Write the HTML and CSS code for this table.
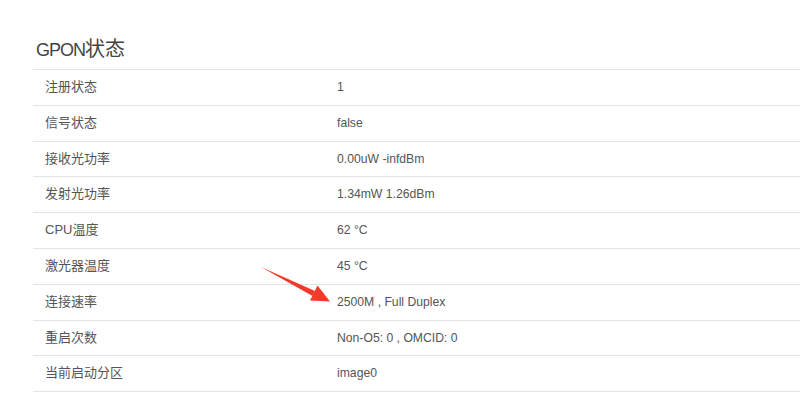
FILE: index.html
```html
<!DOCTYPE html>
<html lang="zh-CN">

<head>
    <meta charset="UTF-8">
    <meta name="viewport" content="width=device-width, initial-scale=1.0">
    <title>GPON状态</title>
    <link rel="stylesheet" href="styles.css">
</head>

<body>
    <div class="content">
        <h2><span class="latin">GPON</span>状态</h2>
        <table class="status-table">
            <tbody>
                <tr><td>注册状态</td><td>1</td></tr>
                <tr><td>信号状态</td><td>false</td></tr>
                <tr><td>接收光功率</td><td>0.00uW -infdBm</td></tr>
                <tr><td>发射光功率</td><td>1.34mW 1.26dBm</td></tr>
                <tr><td>CPU温度</td><td>62 °C</td></tr>
                <tr><td>激光器温度</td><td>45 °C</td></tr>
                <tr><td>连接速率</td><td>2500M , Full Duplex</td></tr>
                <tr><td>重启次数</td><td>Non-O5: 0 , OMCID: 0</td></tr>
                <tr><td>当前启动分区</td><td>image0</td></tr>
            </tbody>
        </table>
    </div>

    <!-- red pointer arrow -->
    <svg class="pointer" width="800" height="399" viewBox="0 0 800 399">
        <polygon points="261,267 315,291 312.5,296 " fill="#f23a2b" />
        <polygon points="330,301.5 310,300.5 317.5,285.5" fill="#f23a2b" />
    </svg>
</body>

</html>
```

FILE: styles.css
```css
/* Reset some default styling */
* {
    margin: 0;
    padding: 0;
    box-sizing: border-box;
}

body {
    font-family: "Liberation Sans", Arial, "Noto Sans CJK SC", sans-serif;
    font-size: 13px;
    color: #555;
    background-color: #fff;
    overflow: hidden;
}

/* Section holding the status table */
.content {
    padding: 35px 0 0 33px;
}

h2 {
    font-size: 20px;
    font-weight: normal;
    color: #444;
    line-height: 28px;
    padding-left: 3px;
    margin-bottom: 5px;
}

h2 .latin {
    font-size: 18px;
    letter-spacing: -1px;
}

.status-table {
    width: 100%;
    border-collapse: collapse;
}

.status-table td {
    padding: 8px 12px;
    line-height: 18.8px;
    border-top: 1px solid #e3e3e3;
    text-align: left;
}

.status-table td + td {
    font-size: 12.2px;
}

.status-table tr:last-child td {
    border-bottom: 1px solid #e3e3e3;
}

.status-table td:first-child {
    width: 292px;
}

.pointer {
    position: absolute;
    left: 0;
    top: 0;
    pointer-events: none;
}
```
